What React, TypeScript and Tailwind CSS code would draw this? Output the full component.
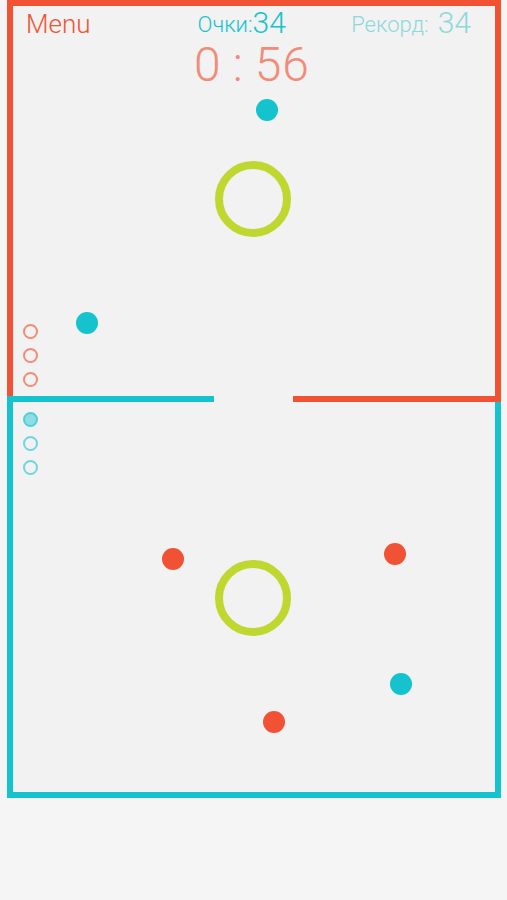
import React from "react";

type Dot = { x: number; y: number; color: string };

const balls: Dot[] = [
  { x: 256, y: 99, color: "bg-[#14c3cd]" },
  { x: 76, y: 312, color: "bg-[#14c3cd]" },
  { x: 162, y: 548, color: "bg-[#f05233]" },
  { x: 384, y: 543, color: "bg-[#f05233]" },
  { x: 263, y: 711, color: "bg-[#f05233]" },
  { x: 390, y: 673, color: "bg-[#14c3cd]" },
];

const lives = [
  { y: 324, cls: "border-[#f28b78]" },
  { y: 348, cls: "border-[#f28b78]" },
  { y: 372, cls: "border-[#f28b78]" },
  { y: 412, cls: "border-[#4fd0d8] bg-[#8ddde2]" },
  { y: 436, cls: "border-[#6fd6dd]" },
  { y: 460, cls: "border-[#6fd6dd]" },
];

export default function App() {
  return (
    <div
      className="relative w-full h-[900px] bg-[#f4f5f4] overflow-hidden"
      style={{ fontFamily: "Roboto, 'Liberation Sans', sans-serif" }}
    >
      <div className="ml-[7px] w-[494px] bg-[#f1f2f1]">
        {/* top half */}
        <div className="h-[396px] border-t-[6px] border-x-[6px] border-[#f05233]">
          <div className="flex items-end h-[32px]">
            <span className="ml-[13px] text-[26px] leading-[28px] font-light text-[#f05233]">Menu</span>
            <span className="ml-[107px] flex items-end text-[#14c3cd] font-light">
              <span className="text-[22px] leading-[26px]">Очки:</span>
              <span className="text-[30px] leading-[30px]">34</span>
            </span>
            <span className="ml-auto mr-[24px] flex items-end text-[#8dd8dd] font-light">
              <span className="text-[22px] leading-[26px]">Рекорд:</span>
              <span className="ml-[9px] text-[30px] leading-[30px]">34</span>
            </span>
          </div>
          <div className="mt-[8px] flex justify-center text-[48px] leading-[38px] font-light text-[#f28b78] pr-[4px]">
            <span>0</span>
            <span className="mx-[12px]">:</span>
            <span className="tracking-[1px]">56</span>
          </div>
        </div>
        {/* divider */}
        <div className="flex h-[6px]">
          <div className="w-[207px] bg-[#14c3cd]" />
          <div className="w-[79px] bg-[#f1f2f1]" />
          <div className="flex-1 bg-[#f05233]" />
        </div>
        {/* bottom half */}
        <div className="h-[396px] border-b-[6px] border-x-[6px] border-[#14c3cd]" />
      </div>

      {/* rings */}
      <div className="absolute left-[215px] top-[161px] w-[76px] h-[76px] rounded-full border-[8px] border-[#c0d72f]" />
      <div className="absolute left-[215px] top-[560px] w-[76px] h-[76px] rounded-full border-[8px] border-[#c0d72f]" />

      {balls.map((b, i) => (
        <div
          key={i}
          className={`absolute w-[22px] h-[22px] rounded-full ${b.color}`}
          style={{ left: b.x, top: b.y }}
        />
      ))}

      {lives.map((l, i) => (
        <div
          key={i}
          className={`absolute left-[23px] w-[15px] h-[15px] rounded-full border-2 ${l.cls}`}
          style={{ top: l.y }}
        />
      ))}
    </div>
  );
}
